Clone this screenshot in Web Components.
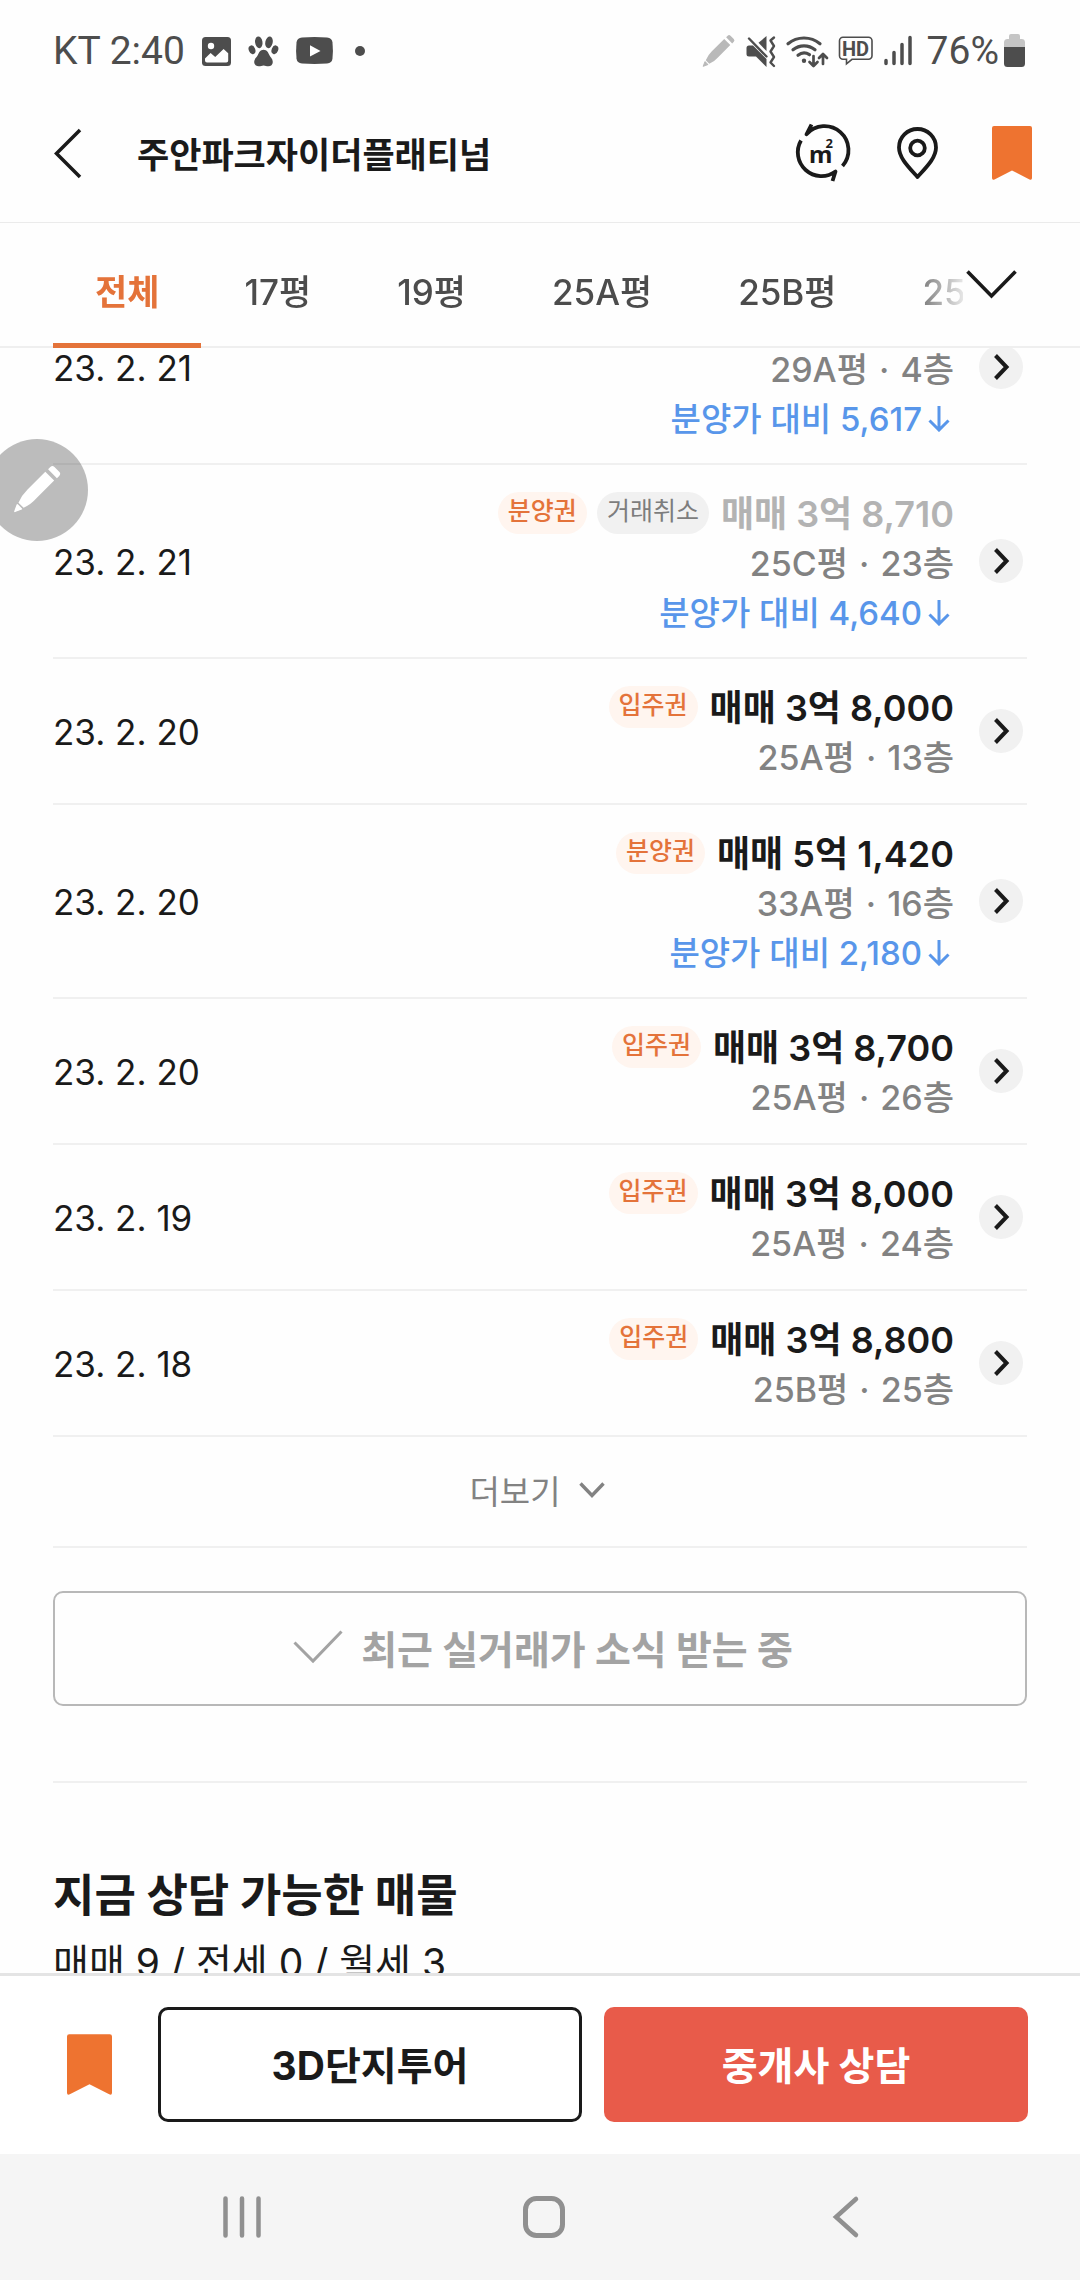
<!DOCTYPE html>
<html lang="ko">
<head>
<meta charset="utf-8">
<meta name="viewport" content="width=device-width, initial-scale=1">
<title>주안파크자이더플래티넘</title>
<style>
  :root {
    --ink: #1a1a1a;
    --ink-soft: #4c4c4c;
    --ink-mute: #828282;
    --line: #f0f0f0;
    --accent: #ee7330;
    --accent-text: #e4733a;
    --blue: #5896ea;
    --red: #e85b4a;
    --gutter: 53px;
  }
  * { box-sizing: border-box; }
  body {
    margin: 0;
    background: #fefefe;
    color: var(--ink);
    font-family: Inter, "Noto Sans CJK KR", sans-serif;
  }
</style>
</head>
<body>
<app-screen>
  <status-bar slot="top" carrier="KT" time="2:40" battery="76%"></status-bar>
  <app-header slot="top">주안파크자이더플래티넘</app-header>
  <size-tabs slot="top" sizes="전체,17평,19평,25A평,25B평,25C평"></size-tabs>

  <deal-row date="23. 2. 21" size="29A평" floor="4층" diff="5,617"></deal-row>
  <deal-row date="23. 2. 21" size="25C평" floor="23층" diff="4,640" cancelled>
    <deal-badge slot="badge">분양권</deal-badge>
    <deal-badge slot="badge" muted>거래취소</deal-badge>
    매매 3억 8,710
  </deal-row>
  <deal-row date="23. 2. 20" size="25A평" floor="13층">
    <deal-badge slot="badge">입주권</deal-badge>
    매매 3억 8,000
  </deal-row>
  <deal-row date="23. 2. 20" size="33A평" floor="16층" diff="2,180">
    <deal-badge slot="badge">분양권</deal-badge>
    매매 5억 1,420
  </deal-row>
  <deal-row date="23. 2. 20" size="25A평" floor="26층">
    <deal-badge slot="badge">입주권</deal-badge>
    매매 3억 8,700
  </deal-row>
  <deal-row date="23. 2. 19" size="25A평" floor="24층">
    <deal-badge slot="badge">입주권</deal-badge>
    매매 3억 8,000
  </deal-row>
  <deal-row date="23. 2. 18" size="25B평" floor="25층">
    <deal-badge slot="badge">입주권</deal-badge>
    매매 3억 8,800
  </deal-row>
  <more-button>더보기</more-button>
  <notify-panel>최근 실거래가 소식 받는 중</notify-panel>
  <listing-summary>
    지금 상담 가능한 매물
    <span slot="counts">매매 9 / 전세 0 / 월세 3</span>
  </listing-summary>

  <floating-pen slot="overlay"></floating-pen>
  <action-bar slot="bottom">
    <span slot="tour">3D단지투어</span>
    <span slot="consult">중개사 상담</span>
  </action-bar>
  <system-nav slot="bottom"></system-nav>
</app-screen>

<script>
const RESET = `
  *, *::before, *::after { box-sizing: border-box; }
  button, a { margin: 0; padding: 0; border: 0; background: none; color: inherit; font: inherit; text-decoration: none; cursor: pointer; }
`;

/* name: [viewBox, markup] */
const ICONS = {
  image: ['203 36 31 31', `<rect x="204" y="37" width="29" height="29" rx="3.5" fill="currentColor"/><circle cx="213" cy="46" r="3.2" fill="#fff"/><path d="M207 58.5l5.6-5.4 4.6 4 8.4-8.2 4.6 4.4v7.2a2 2 0 0 1-2 2h-19.2a2 2 0 0 1-2-2z" fill="#fff"/>`],
  paw: ['250 36 31 31', `<g fill="currentColor"><ellipse cx="254" cy="49.8" rx="3.2" ry="4.5" transform="rotate(-22 254 49.8)"/><ellipse cx="260.8" cy="42.3" rx="3.7" ry="5.9" transform="rotate(-8 260.8 42.3)"/><ellipse cx="271" cy="42.3" rx="3.7" ry="5.9" transform="rotate(12 271 42.3)"/><ellipse cx="276.9" cy="49.8" rx="3.2" ry="4.5" transform="rotate(22 276.9 49.8)"/><path d="M265.6 49.8c3.4 0 4.8 3 5.600 5 1 2.300 3.600 4 3.600 7.200 0 2.800-2 4.200-4.400 4.200-2 0-3-.8-4.800-.8s-2.800.8-4.800.8c-2.400 0-4.600-1.400-4.600-4.200 0-3.200 2.800-4.900 3.800-7.200.8-2 2.200-5 5.600-5z"/></g>`],
  video: ['293 37 39 30', `<path d="M300 38.600q12.500-1 25 0 5 .4 5.500 5 .8 8 0 16-.5 4.500-5.500 5-12.500.9-25 0-5-.5-5.500-5-.8-8 0-16 .5-4.600 5.500-5z" fill="currentColor"/><path d="M308 46.200v11.400l10.500-5.700z" fill="#fff"/>`],
  dot: ['353 45 12 12', `<circle cx="359" cy="51" r="5" fill="currentColor"/>`],
  pen: ['698 35 33 33', `<g fill="currentColor" transform="translate(699 66.500) rotate(-45)"><path d="M.4 0L4.800-2v4z" stroke="currentColor" stroke-width="1" stroke-linejoin="round"/><path d="M6.400-2.500Q12-4.600 17-4.500H34.500v8.600H17Q12 4.500 6.400 2.500z"/><path d="M37-4.300h2.200a2 2 0 0 1 2 2v4.600a2 2 0 0 1-2 2H37z"/></g>`],
  mute: ['743 36 31 31', `<g fill="currentColor"><path d="M747 45.500h4l13.500 13.500v8l-10.500-10.500h-7a2.500 2.500 0 0 1-2.500-2.500v-6a2.500 2.500 0 0 1 2.500-2.500z"/><path d="M756.500 42.800L764.500 36v15z"/></g><g fill="none" stroke="currentColor" stroke-width="2.400" stroke-linecap="round" stroke-linejoin="round"><path d="M747 38.500l17.500 18"/><path d="M772 37.500l-3.500 3 3.500 5.500-3.500 5.500 3.500 5.500-3.500 5.500 3.500 3.500"/></g>`],
  wifi: ['787 35 42 33', `<g fill="none" stroke="currentColor" stroke-width="3.200" stroke-linecap="round" stroke-linejoin="round"><path d="M789 43.800a25 25 0 0 1 32 0"/><path d="M794 49.800a17.500 17.500 0 0 1 22 0"/><path d="M799 55.300a10 10 0 0 1 11.500-.6"/><path d="M814.500 56v9.500m-4-3.500l4 4 4-4M824 64v-9.500m-4 3.500l4-4 4 4" stroke-width="2.700"/></g><circle cx="805" cy="60.800" r="2.200" fill="currentColor"/>`],
  hd: ['840 37 35 30', `<path d="M845 38.300h25.500a3.500 3.500 0 0 1 3.500 3.500v15a3.500 3.500 0 0 1-3.500 3.500H854l-5.500 4.500v-4.500H845a3.500 3.500 0 0 1-3.500-3.500V41.800a3.500 3.500 0 0 1 3.500-3.500z" fill="none" stroke="currentColor" stroke-width="1.600"/><text x="857.500" y="56.500" text-anchor="middle" font-family="Roboto, sans-serif" font-size="20" font-weight="700" fill="currentColor">HD</text>`],
  signal: ['883 35 30 32', `<path d="M886 60.500v3M894 52.500v11M902 44.500v19M910 37.500v26" stroke="currentColor" stroke-width="3.500" stroke-linecap="round"/>`],
  battery: ['1004 34 23 34', `<path d="M1012 34h7a2 2 0 0 1 2 2v3h1.500a3.500 3.500 0 0 1 3.500 3.500V48h-21v-5.500a3.500 3.500 0 0 1 3.500-3.500h1.500v-3a2 2 0 0 1 2-2z" fill="#c5c5c5"/><path d="M1005 47h21v16.500a3.500 3.500 0 0 1-3.500 3.500h-14a3.500 3.500 0 0 1-3.500-3.500z" fill="currentColor"/>`],
  back: ['54 128 27 50', `<path d="M80 130L56.500 153.500 80 177" fill="none" stroke="currentColor" stroke-width="3.500"/>`],
  area: ['795 123 56 62', `<g fill="none" stroke="currentColor" stroke-width="3.800" stroke-linejoin="round"><path d="M812.500 125.500L807.500 135.300A23.700 23.700 0 0 1 843.500 167"/><path d="M802 141.500A23.700 23.700 0 0 0 836.500 172.500L833.500 182"/></g><text x="810" y="163.500" font-family="'Noto Sans', sans-serif" font-weight="700" font-size="24" fill="currentColor">m<tspan dx="-7" dy="-15" font-size="13">2</tspan></text>`],
  pin: ['895 126 45 55', `<path d="M917.500 177C909 167.500 899 158 899 147.500a18.500 18.500 0 0 1 37 0C936 158 926 167.500 917.500 177z" fill="none" stroke="currentColor" stroke-width="3.800" stroke-linejoin="round"/><circle cx="917.500" cy="148" r="7.300" fill="none" stroke="currentColor" stroke-width="3.800"/>`],
  bookmark: ['0 0 40 54', `<path d="M2 0h36a2 2 0 0 1 2 2v50q0 2.500-2.500 1.500L20 44.500 2.500 53.500Q0 54.500 0 52V2a2 2 0 0 1 2-2z" fill="currentColor"/>`],
  expand: ['966 269 51 31', `<path d="M967.500 271.500L991.500 296 1015.500 271.500" fill="none" stroke="currentColor" stroke-width="3.600"/>`],
  next: ['0 0 14 26', `<path d="M1.500 1.500L12.500 13 1.500 24.500" fill="none" stroke="currentColor" stroke-width="4"/>`],
  more: ['0 0 26 16', `<path d="M1.500 1.500L13 13.500 24.500 1.500" fill="none" stroke="currentColor" stroke-width="3.400"/>`],
  check: ['0 0 50 33', `<path d="M1.500 12.500L20 31 48.500 1.500" fill="none" stroke="currentColor" stroke-width="3"/>`],
  recents: ['0 0 38 42', `<path d="M2.500 2.500v37M19 2.500v37M35.500 2.500v37" stroke="currentColor" stroke-width="4.500" stroke-linecap="round"/>`],
  home: ['0 0 42 42', `<rect x="2.500" y="2.500" width="37" height="37" rx="11" fill="none" stroke="currentColor" stroke-width="5"/>`],
  navback: ['0 0 26 42', `<path d="M23 3L3 21 23 39" fill="none" stroke="currentColor" stroke-width="4.500" stroke-linecap="round"/>`],
};

function define(name, render, after) {
  customElements.define(name, class extends HTMLElement {
    connectedCallback() {
      if (this.shadowRoot) return;
      const root = this.attachShadow({ mode: 'open' });
      const t = document.createElement('template');
      t.innerHTML = render(this);
      const reset = document.createElement('style');
      reset.textContent = RESET;
      root.append(reset, t.content.cloneNode(true));
      if (after) after(this, root);
    }
  });
}

define('ui-icon', el => {
  const [box, art] = ICONS[el.getAttribute('name')];
  const [, , w, h] = box.split(' ').map(Number);
  const width = Number(el.getAttribute('width')) || w;
  return `<style>:host{display:block;flex:none} svg{display:block;overflow:visible}</style>
    <svg viewBox="${box}" width="${width}" height="${Math.round(h * width / w)}" aria-hidden="true">${art}</svg>`;
});

define('app-screen', () => `
  <style>
    :host { display: flex; flex-direction: column; height: 100vh; position: relative; overflow: hidden; }
    main { flex: 1; min-height: 0; overflow-y: auto; scrollbar-width: none; }
    .list { padding: 0 var(--gutter); }
  </style>
  <slot name="top"></slot>
  <main><div class="list"><slot></slot></div></main>
  <slot name="bottom"></slot>
  <slot name="overlay"></slot>`,
  (el, root) => requestAnimationFrame(() => { root.querySelector('main').scrollTop = 77; }));

define('status-bar', el => `
  <style>
    :host { display: flex; justify-content: space-between; align-items: center; padding: 27px 54px 9px 53px; color: #4d4d4d; font: 400 39px/48px Roboto, sans-serif; }
    div { display: flex; align-items: center; gap: 10px; }
    .left { gap: 16px; }
    .dot { padding-left: 4px; }
    .charge { gap: 4px; padding-left: 4px; }
  </style>
  <div class="left">
    <span>${el.getAttribute('carrier')} ${el.getAttribute('time')}</span>
    <ui-icon name="image"></ui-icon><ui-icon name="paw"></ui-icon><ui-icon name="video"></ui-icon>
    <ui-icon class="dot" name="dot"></ui-icon>
  </div>
  <div>
    <ui-icon name="pen" style="color:#b9b9b9"></ui-icon><ui-icon name="mute"></ui-icon><ui-icon name="wifi"></ui-icon>
    <ui-icon name="hd"></ui-icon><ui-icon name="signal"></ui-icon>
    <div class="charge"><span>${el.getAttribute('battery')}</span><ui-icon name="battery"></ui-icon></div>
  </div>`);

define('app-header', () => `
  <style>
    header { display: flex; align-items: center; height: 139px; padding: 0 48px 0 54px; border-bottom: 1px solid #ebebeb; }
    h1 { flex: 1; margin: 0; padding: 4px 0 0 56px; font-size: 35px; line-height: 48px; font-weight: 700; }
    nav { display: flex; align-items: center; gap: 45px; }
    .mark { color: var(--accent); padding-left: 7px; }
    :host { display: block; }
  </style>
  <header>
    <button aria-label="뒤로"><ui-icon name="back"></ui-icon></button>
    <h1><slot></slot></h1>
    <nav>
      <button aria-label="단위 전환"><ui-icon name="area"></ui-icon></button>
      <button aria-label="지도"><ui-icon name="pin"></ui-icon></button>
      <button class="mark" aria-label="관심 단지"><ui-icon name="bookmark"></ui-icon></button>
    </nav>
  </header>`);

define('size-tabs', el => `
  <style>
    :host { display: flex; height: 125px; padding: 0 var(--gutter); box-shadow: inset 0 -2px #efefef; color: var(--ink-soft); }
    .tabs { flex: 1; min-width: 0; display: flex; overflow: hidden; -webkit-mask-image: linear-gradient(to left, #0002, #000 60px); mask-image: linear-gradient(to left, #0002, #000 60px); }
    .tabs button { flex: none; padding: 12px 43px 0; font-size: 35px; line-height: 48px; font-weight: 500; }
    .tabs [aria-selected="true"] { padding: 12px 42px 0; color: var(--accent-text); font-weight: 700; box-shadow: inset 0 -5px var(--accent-text); }
    .open { width: 64px; color: var(--ink); padding: 0 0 3px 3px; }
  </style>
  <div class="tabs" role="tablist">${el.getAttribute('sizes').split(',').map((s, i) =>
    `<button role="tab" aria-selected="${i === 0}">${s}</button>`).join('')}</div>
  <button class="open" aria-label="평형 모두 보기"><ui-icon name="expand"></ui-icon></button>`);

define('deal-badge', () => `
  <style>
    :host { display: block; margin-bottom: 2px; padding: 0 10px 4px; border-radius: 21px; background: #fff5ef; color: var(--accent-text); font-size: 25px; line-height: 38px; font-weight: 500; }
    :host([muted]) { background: #f1f1f1; color: #7d7d7d; font-weight: 400; }
  </style><slot></slot>`);

define('deal-row', el => `
  <style>
    :host { display: flex; align-items: center; gap: 25px; padding: 24px 4px 20px 0; border-bottom: 2px solid var(--line); }
    time { flex: 1; padding-bottom: 2px; font-size: 35px; line-height: 48px; }
    .info { display: flex; flex-direction: column; align-items: flex-end; line-height: 50px; }
    .top { display: flex; align-items: center; gap: 10px; height: 50px; }
    .price { padding-left: 2px; font-size: 36px; font-weight: 600; }
    :host([cancelled]) .price { color: #b3b3b3; }
    .spec { font-size: 34px; font-weight: 500; color: var(--ink-mute); }
    .spec i { padding: 0 2px; font-style: normal; }
    .diff { font-size: 33px; line-height: 48px; font-weight: 500; color: var(--blue); display: flex; align-items: center; gap: 6px; padding-right: 4px; }
    a { display: flex; align-items: center; justify-content: center; width: 44px; height: 44px; margin-bottom: 4px; border-radius: 50%; background: #f1f1f1; }
  </style>
  <time>${el.getAttribute('date')}</time>
  <div class="info">
    <div class="top"><slot name="badge"></slot><span class="price"><slot></slot></span></div>
    <div class="spec">${el.getAttribute('size')}<i> · </i>${el.getAttribute('floor')}</div>
    ${el.hasAttribute('diff') ? `<div class="diff">분양가 대비 ${el.getAttribute('diff')}<svg width="22" height="26" viewBox="0 0 22 26" aria-hidden="true"><path d="M11 0v24M1.500 14.500L11 24l9.500-9.500" fill="none" stroke="currentColor" stroke-width="3"/></svg></div>` : ''}
  </div>
  <a href="#deal" aria-label="거래 상세"><ui-icon name="next"></ui-icon></a>`);

define('more-button', () => `
  <style>
    :host { display: block; border-bottom: 2px solid var(--line); }
    button { display: flex; align-items: center; justify-content: center; gap: 18px; width: 100%; height: 109px; padding: 0 6px 4px 0; color: var(--ink-mute); font-size: 33px; }
  </style><button><slot></slot><ui-icon name="more"></ui-icon></button>`);

define('notify-panel', () => `
  <style>
    :host { display: block; padding: 43px 0 75px; border-bottom: 2px solid var(--line); }
    button { display: flex; align-items: center; justify-content: center; gap: 18px; width: 100%; height: 115px; padding: 0 0 4px 6px; border: 2px solid #b8b8b8; border-radius: 10px; color: #a3a3a3; font-size: 39px; font-weight: 700; }
  </style><button><ui-icon name="check"></ui-icon><span><slot></slot></span></button>`);

define('listing-summary', () => `
  <style>
    :host { display: block; padding-top: 80px; }
    h2 { margin: 0; font-size: 45px; line-height: 66px; font-weight: 700; }
    p { margin: 6px 0 0; font-size: 39px; line-height: 56px; }
  </style><h2><slot></slot></h2><p><slot name="counts"></slot></p>`);

define('action-bar', () => `
  <style>
    :host { display: flex; align-items: center; gap: 31px; padding: 31px 52px 32px 53px; border-top: 3px solid #e4e4e4; background: #fff; }
    .mark { display: flex; width: 74px; padding-left: 14px; color: var(--accent); }
    .pair { flex: 1; display: grid; grid-template-columns: 1fr 1fr; gap: 22px; }
    .pair button { height: 115px; padding-bottom: 4px; border-radius: 10px; font-size: 39px; font-weight: 700; }
    .tour { border: 3px solid var(--ink); }
    .consult { background: var(--red); color: #fff; }
  </style>
  <button class="mark" aria-label="관심 단지"><ui-icon name="bookmark" width="45"></ui-icon></button>
  <div class="pair">
    <button class="tour"><slot name="tour"></slot></button>
    <button class="consult"><slot name="consult"></slot></button>
  </div>`);

define('system-nav', () => `
  <style>
    :host { display: flex; height: 126px; padding: 0 83px 0 91px; background: #f5f5f5; color: #909090; }
    button { flex: 1; display: flex; align-items: center; justify-content: center; }
  </style>
  <button aria-label="최근 앱"><ui-icon name="recents"></ui-icon></button>
  <button aria-label="홈"><ui-icon name="home"></ui-icon></button>
  <button aria-label="뒤로"><ui-icon name="navback"></ui-icon></button>`);

define('floating-pen', () => `
  <style>
    :host { position: absolute; left: -14px; top: 439px; }
    button { display: flex; align-items: center; justify-content: center; width: 102px; height: 102px; border-radius: 50%; background: #00000042; color: #fff; }
  </style><button aria-label="펜 도구"><ui-icon name="pen" width="48"></ui-icon></button>`);
</script>
</body>
</html>
